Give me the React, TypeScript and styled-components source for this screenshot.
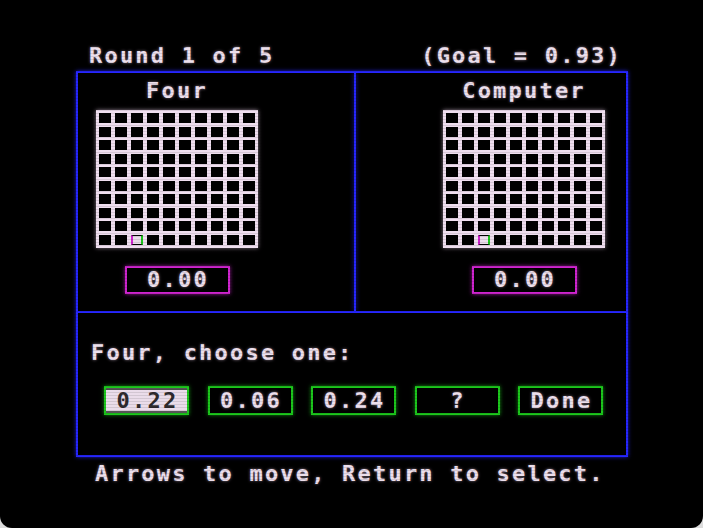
import styled, { createGlobalStyle } from "styled-components";

const Global = createGlobalStyle`
  html, body {
    margin: 0;
    padding: 0;
    background: #dcdcdc;
  }
`;

const TEXT = "#ecdfec";
const BLUE = "#2626ff";
const MAGENTA = "#d024d0";
const GREEN = "#1cc81c";

const Screen = styled.div`
  position: relative;
  width: 703px;
  height: 528px;
  background: #000;
  border-radius: 0 0 12px 12px;
  overflow: hidden;
  box-sizing: border-box;
  padding-top: 44px;
  font-family: "DejaVu Sans Mono", "Liberation Mono", monospace;
  font-weight: bold;
  font-size: 22px;
  line-height: 24px;
  letter-spacing: 2.2px;
  color: ${TEXT};
  text-shadow: 0 0 3px rgba(236, 210, 236, 0.55);
`;

const Scanlines = styled.div`
  position: absolute;
  inset: 0;
  pointer-events: none;
  background: repeating-linear-gradient(
    to bottom,
    rgba(0, 0, 0, 0) 0px,
    rgba(0, 0, 0, 0) 2px,
    rgba(0, 0, 0, 0.1) 2px,
    rgba(0, 0, 0, 0.1) 3px
  );
`;

const Header = styled.div`
  display: flex;
  justify-content: space-between;
  margin-left: 89px;
  width: 533px;
  height: 27px;
`;

const Frame = styled.div`
  margin-left: 76px;
  width: 552px;
  height: 386px;
  box-sizing: border-box;
  border: 2px solid ${BLUE};
  box-shadow: 0 0 4px rgba(40, 40, 255, 0.8);
  display: flex;
  flex-direction: column;
`;

const TopRow = styled.div`
  display: grid;
  grid-template-columns: 276px 2px 1fr;
  height: 240px;
  border-bottom: 2px solid ${BLUE};
  box-sizing: border-box;
`;

const Divider = styled.div`
  background: ${BLUE};
  box-shadow: 0 0 4px rgba(40, 40, 255, 0.8);
`;

const Panel = styled.div<{ $side: "left" | "right" }>`
  display: flex;
  justify-content: ${(p) => (p.$side === "left" ? "flex-start" : "flex-end")};
  padding: 6px ${(p) => (p.$side === "left" ? "0 0 18px" : "21px 0 0")};
`;

const PlayerColumn = styled.div`
  width: 162px;
  display: flex;
  flex-direction: column;
  align-items: center;
`;

const Title = styled.div`
  height: 24px;
  margin-bottom: 7px;
  white-space: pre;
`;

const Board = styled.div`
  width: 162px;
  height: 138px;
  box-sizing: border-box;
  padding: 3px;
  display: grid;
  grid-template-columns: repeat(10, 1fr);
  grid-template-rows: repeat(10, 1fr);
  gap: 3.5px;
  background: #efdeef;
  box-shadow: 0 0 4px rgba(238, 210, 238, 0.6);
`;

const Cell = styled.div<{ $on?: boolean }>`
  background: ${(p) => (p.$on ? "#eadcea" : "#000")};
  box-sizing: border-box;
  ${(p) =>
    p.$on
      ? `border-left: 2px solid ${MAGENTA}; border-right: 2px solid ${GREEN}; border-top: 1px solid #000; border-bottom: 1px solid #000;`
      : ""}
`;

const Score = styled.div`
  margin-top: 18px;
  width: 105px;
  height: 28px;
  box-sizing: border-box;
  border: 2px solid ${MAGENTA};
  box-shadow: 0 0 4px rgba(208, 36, 208, 0.7);
  display: flex;
  align-items: center;
  justify-content: center;
  padding-left: 2px;
`;

const Bottom = styled.div`
  flex: 1;
  padding: 28px 0 0 13px;
`;

const Prompt = styled.div`
  height: 24px;
  white-space: pre;
`;

const Choices = styled.div`
  display: flex;
  gap: 18.5px;
  margin-top: 21px;
  margin-left: 13px;
`;

const Choice = styled.div<{ $selected?: boolean }>`
  width: 85px;
  height: 29px;
  box-sizing: border-box;
  border: 2px solid ${GREEN};
  box-shadow: 0 0 4px rgba(28, 200, 28, 0.7);
  display: flex;
  align-items: center;
  justify-content: center;
  padding-left: 2px;
  background: ${(p) => (p.$selected ? "#eadcea" : "#000")};
  color: ${(p) => (p.$selected ? "#2e2a2e" : TEXT)};
  text-shadow: ${(p) => (p.$selected ? "none" : "0 0 3px rgba(236, 210, 236, 0.55)")};
  ${(p) => (p.$selected ? "box-shadow: inset 0 2px 0 #555, inset 0 -2px 0 #555, 0 0 4px rgba(28,200,28,0.7);" : "")}
`;

const Footer = styled.div`
  margin: 5px 0 0 95px;
  height: 24px;
  white-space: pre;
`;

function PlayerBoard({ name }: { name: string }) {
  const cells = Array.from({ length: 100 }, (_, i) => i);
  return (
    <PlayerColumn>
      <Title>{name}</Title>
      <Board>
        {cells.map((i) => (
          <Cell key={i} $on={i === 92} />
        ))}
      </Board>
      <Score>0.00</Score>
    </PlayerColumn>
  );
}

const options = ["0.22", "0.06", "0.24", "?", "Done"];

export default function App() {
  return (
    <>
      <Global />
      <Screen>
        <Header>
          <span>Round 1 of 5</span>
          <span>(Goal = 0.93)</span>
        </Header>
        <Frame>
          <TopRow>
            <Panel $side="left">
              <PlayerBoard name="Four" />
            </Panel>
            <Divider />
            <Panel $side="right">
              <PlayerBoard name="Computer" />
            </Panel>
          </TopRow>
          <Bottom>
            <Prompt>Four, choose one:</Prompt>
            <Choices>
              {options.map((o, i) => (
                <Choice key={o} $selected={i === 0}>
                  {o}
                </Choice>
              ))}
            </Choices>
          </Bottom>
        </Frame>
        <Footer>Arrows to move, Return to select.</Footer>
        <Scanlines />
      </Screen>
    </>
  );
}
